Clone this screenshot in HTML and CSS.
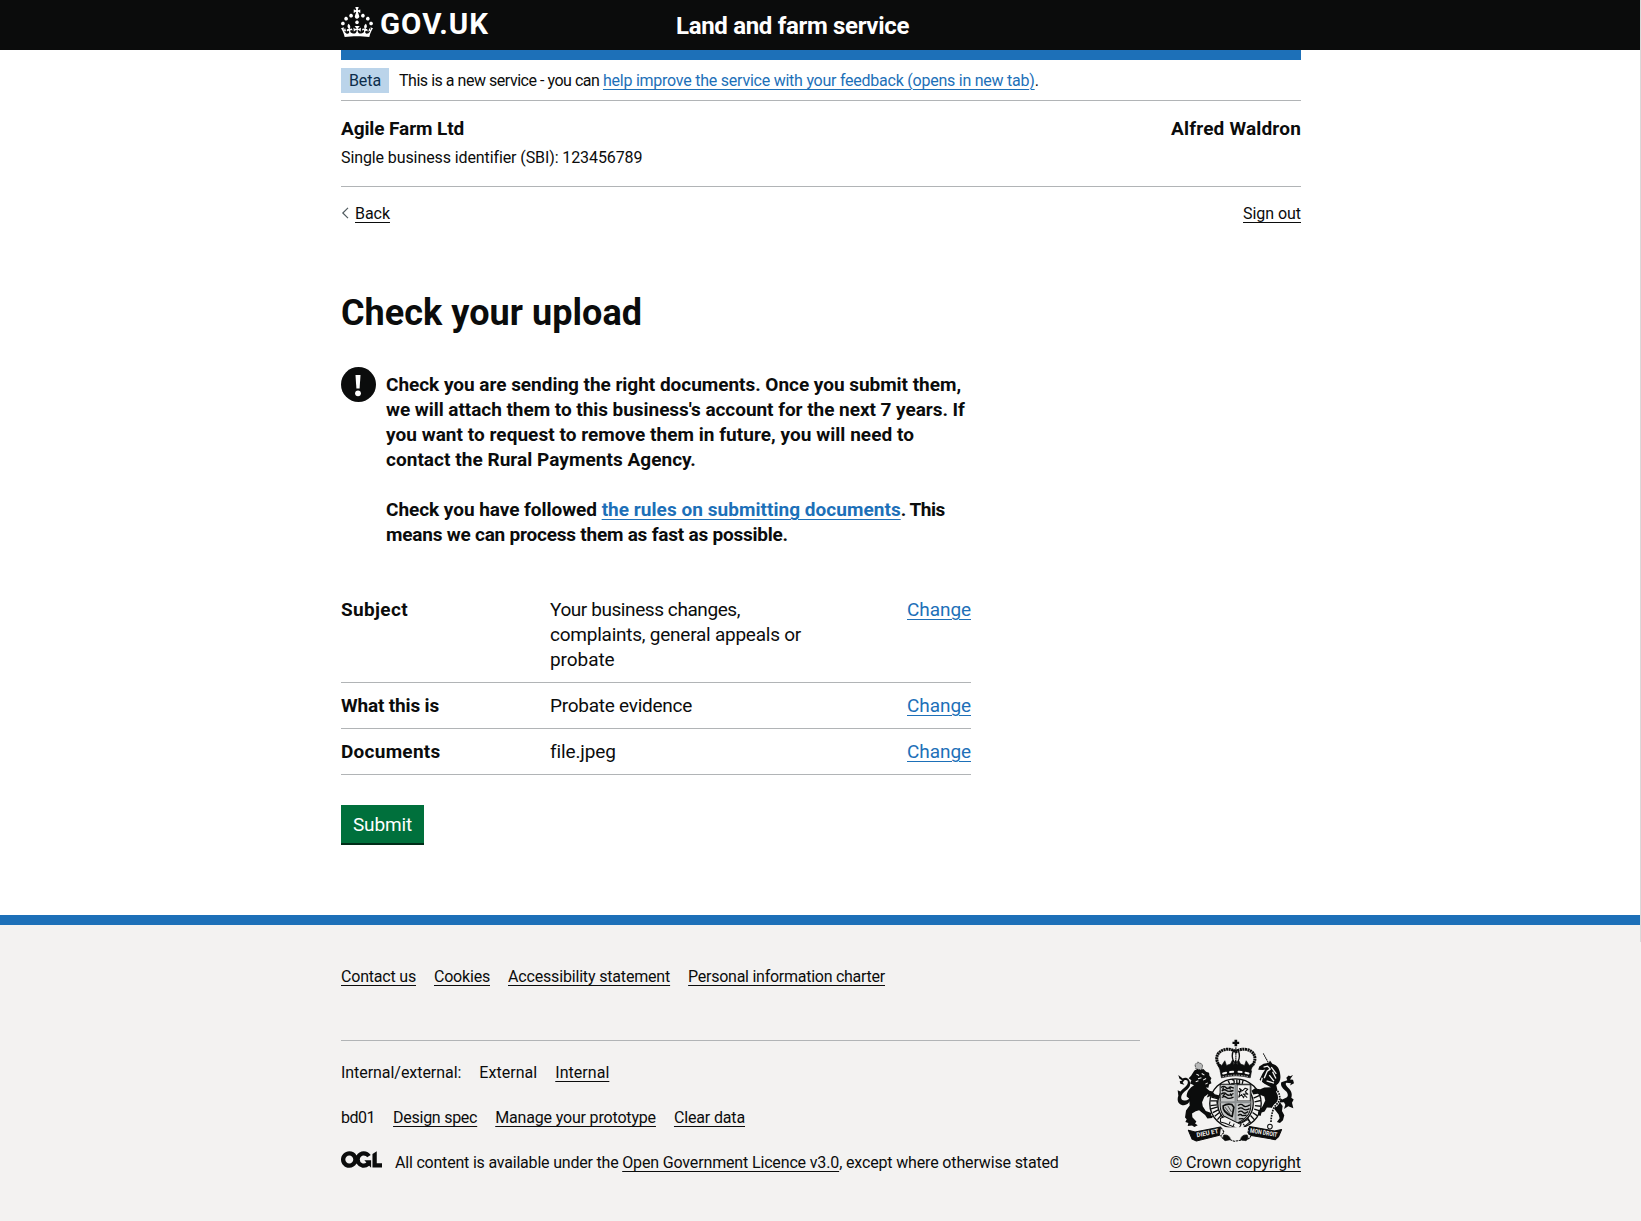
FILE: index.html
```html
<!DOCTYPE html>
<html lang="en">
<head>
<meta charset="utf-8">
<title>Check your upload</title>
<link rel="stylesheet" href="styles.css">
</head>
<body>
<header class="header">
  <div class="container header-row">
    <a class="logo" href="#">
      <svg class="logo-crown" viewBox="0 0 32 30" width="32" height="30" fill="#fff" aria-hidden="true"><path fill-rule="evenodd" d="M22.6 10.4c-1 .4-2-.1-2.4-1-.4-.9.1-2 1-2.4.9-.4 2 .1 2.4 1s-.1 2-1 2.4m-5.9 6.7c-.9.4-2-.1-2.4-1-.4-.9.1-2 1-2.4.9-.4 2 .1 2.4 1s-.1 2-1 2.4m10.8-3.7c-1 .4-2-.1-2.4-1-.4-.9.1-2 1-2.4.9-.4 2 .1 2.4 1s0 2-1 2.4m3.3 4.8c-1 .4-2-.1-2.4-1-.4-.9.1-2 1-2.4.9-.4 2 .1 2.4 1s-.1 2-1 2.4M17 4.7l2.3 1.2V2.5l-2.3.7-.2-.2.9-3h-3.4l.9 3-.2.2c-.1.1-2.3-.7-2.3-.7v3.4L15 4.7c.1.1.1.2.2.2l-1.3 4c-.1.2-.1.4-.1.6 0 1.1.8 2 1.9 2.2h.7c1-.2 1.9-1.1 1.9-2.1 0-.2 0-.4-.1-.6l-1.3-4c-.1-.2 0-.2.1-.3m-7.6 5.7c.9.4 2-.1 2.4-1 .4-.9-.1-2-1-2.4-.9-.4-2 .1-2.4 1s0 2 1 2.4m-5 3c.9.4 2-.1 2.4-1 .4-.9-.1-2-1-2.4-.9-.4-2 .1-2.4 1s.1 2 1 2.4m-3.2 4.8c.9.4 2-.1 2.4-1 .4-.9-.1-2-1-2.4-.9-.4-2 .1-2.4 1s0 2 1 2.4m14.8 11c4.4 0 8.6.3 12.3.8 1.1-4.5 2.4-7 3.7-8.8l-2.5-.9c.2 1.3.3 1.9 0 2.7-.4-.4-.8-1.1-1.1-2.3l-1.2 4c.7-.5 1.3-.8 2-.9-1.1 2.5-2.6 3.1-3.5 3-1.1-.2-1.7-1.2-1.5-2.1.3-1.2 1.5-1.5 2.1-.1 1.1-2.3-.8-3-2-2.3 1.9-1.9 2.1-3.5.6-5.6-2.1 1.6-2.1 3.2-1.2 5.5-1.2-1.4-3.2-.6-2.5 1.6.9-1.4 2.1-.5 1.9.8-.2 1.1-1.7 2.1-3.5 1.9-2.7-.2-2.9-2.1-2.9-3.6.7-.1 1.9.5 2.9 1.9l.4-4.3c-1.1 1.1-2.1 1.4-3.2 1.4.4-1.2 2.1-3 2.1-3h-5.4s1.7 1.9 2.1 3c-1.1 0-2.1-.2-3.2-1.4l.4 4.3c1-1.4 2.2-2 2.9-1.9-.1 1.5-.2 3.4-2.9 3.6-1.9.2-3.4-.8-3.5-1.9-.2-1.3 1-2.2 1.9-.8.7-2.3-1.2-3-2.5-1.6.9-2.2.9-3.9-1.2-5.5-1.5 2-1.3 3.7.6 5.6-1.2-.7-3.1 0-2 2.3.6-1.4 1.8-1.1 2.1.1.2.9-.3 1.9-1.5 2.1-.9.2-2.4-.5-3.5-3 .6 0 1.2.3 2 .9l-1.2-4c-.3 1.1-.7 1.9-1.1 2.3-.3-.8-.2-1.4 0-2.7l-2.9.9C1.3 23 2.6 25.5 3.7 30c3.7-.5 7.9-.8 12.3-.8"/></svg>
      <span class="logo-text">GOV.UK</span>
    </a>
    <a class="service-name" href="#">Land and farm service</a>
  </div>
</header>

<div class="container">
  <div class="header-bar"></div>
  <div class="phase-banner">
    <strong class="tag">Beta</strong>
    <span class="phase-text"><span class="track-phase">This is a new service - you can </span><a class="link track-24" href="#">help improve the service with your feedback (opens in new tab)</a>.</span>
  </div>
  <div class="business">
    <div class="business-names">
      <strong class="track-10">Agile Farm Ltd</strong>
      <strong class="track-user">Alfred Waldron</strong>
    </div>
    <div class="sbi">Single business identifier (SBI): 123456789</div>
  </div>
  <nav class="nav-row">
    <a class="back" href="#"><svg width="8" height="12" viewBox="0 0 8 12" fill="none" stroke="#505a5f" stroke-width="1.2" aria-hidden="true"><path d="M7 .8 1.800 6 7 11.200"/></svg><span class="link-black">Back</span></a>
    <a class="link-black" href="#">Sign out</a>
  </nav>

  <main class="main">
    <h1>Check your upload</h1>
    <div class="warning">
      <span class="warning-icon"><svg width="35" height="35" viewBox="0 0 35 35" aria-hidden="true"><circle cx="17.5" cy="17.5" r="17.5" fill="#0b0c0c"/><path d="M14.500 8h5l-.9 13.600h-3.200z" fill="#fff"/><circle cx="17" cy="26.300" r="2.900" fill="#fff"/></svg></span>
      <div class="warning-text">
        <p>Check you are sending the right documents. Once you submit them,<br><span class="track-4">we will attach them to this business's account for the next 7 years. If</span><br><span class="track-p4">you want to request to remove them in future, you will need to<br>contact the Rural Payments Agency.</span></p>
        <p><span class="track-4">Check you have followed </span><a class="link track-p4" href="#">the rules on submitting documents</a><span class="track-this">. This</span><br><span class="track-22">means we can process them as fast as possible.</span></p>
      </div>
    </div>
    <dl class="summary">
      <div class="row">
        <dt class="track-subject">Subject</dt>
        <dd><span class="track-42">Your business changes,</span><br><span class="track-24">complaints, general appeals or</span><br><span class="track-7">probate</span></dd>
        <dd class="action"><a class="link" href="#">Change</a></dd>
      </div>
      <div class="row">
        <dt class="track-what">What this is</dt>
        <dd class="track-26">Probate evidence</dd>
        <dd class="action"><a class="link" href="#">Change</a></dd>
      </div>
      <div class="row">
        <dt class="track-documents">Documents</dt>
        <dd class="track-13">file.jpeg</dd>
        <dd class="action"><a class="link" href="#">Change</a></dd>
      </div>
    </dl>
    <button class="button" type="button">Submit</button>
  </main>
</div>

<footer class="footer">
  <div class="container">
    <div class="footer-links top-links">
      <a class="link-black track-20" href="#">Contact us</a>
      <a class="link-black track-20" href="#">Cookies</a>
      <a class="link-black track-17" href="#">Accessibility statement</a>
      <a class="link-black track-26" href="#">Personal information charter</a>
    </div>
    <div class="footer-meta">
      <div class="footer-main">
        <div class="footer-links">
          <span>Internal/external:</span>
          <span class="track-p4">External</span>
          <a class="link-black track-p4" href="#">Internal</a>
        </div>
        <div class="footer-links">
          <span class="track-this">bd01</span>
          <a class="link-black track-26" href="#">Design spec</a>
          <a class="link-black track-17" href="#">Manage your prototype</a>
          <a class="link-black track-15" href="#">Clear data</a>
        </div>
        <div class="licence">
          <svg width="41" height="17" viewBox="0 0 483.2 195.7" fill="#0b0c0c" aria-hidden="true"><path d="M421.5 142.8V.1l-50.7 32.3v161.1h112.4v-50.7zm-122.3-9.6A47.12 47.12 0 0 1 221 97.8c0-26 21.1-47.1 47.1-47.1 16.7 0 31.4 8.7 39.7 21.8l42.7-27.2A97.63 97.63 0 0 0 268.1 0c-36.500 0-68.300 20.100-85.100 49.700A98 98 0 0 0 97.800 0C43.900 0 0 43.900 0 97.800s43.900 97.800 97.800 97.800c36.500 0 68.300-20.100 85.100-49.700a97.760 97.760 0 0 0 149.600 25.400l19.400 22.200h3v-87.800h-80l24.300 27.500zM97.800 145c-26 0-47.100-21.100-47.100-47.100s21.100-47.100 47.100-47.100 47.100 21.100 47.100 47.100S123.800 145 97.800 145"/></svg>
          <span><span class="track-20">All content is available under the </span><a class="link-black track-15" href="#">Open Government Licence v3.0</a><span class="track-15">, except where otherwise stated</span></span>
        </div>
      </div>
      <a class="copyright" href="#">
        <svg class="crest" width="117" height="103" viewBox="144 55 350 308" fill="none" stroke="#0b0c0c" stroke-linejoin="round" aria-hidden="true">
          <!-- crown -->
          <g>
            <path d="M316 57h8v6h6v7h-6v7h-8v-7h-6v-7h6z" fill="#0b0c0c" stroke="none"/>
            <path d="M272 136c-18-22-8-46 18-50 12-2 24 2 30 8 6-6 18-10 30-8 26 4 36 28 18 50" stroke-width="9" stroke-dasharray="6 1.500"/>
            <path d="M314 88c-6 10-5 25 0 36h12c5-11 6-26 0-36z" stroke-width="4"/>
            <path d="M320 80v44" stroke-width="4" stroke-dasharray="4 2"/>
            <path d="M264 126l14 8 9-14 5 14 12-4 6-12 4 14 5-14 5 14 4-14 6 12 12 4 5-14 9 14 14-8-10 25H274z" fill="#0b0c0c" stroke-width="2"/>
            <path d="M273 150q47-14 94 0l-4 21q-43-12-86 0z" fill="#0b0c0c" stroke-width="2"/>
            <path d="M282 158l9-2M303 154l9-1M328 153l9 1M349 156l9 2" stroke="#f3f2f1" stroke-width="6" stroke-linecap="round"/>
            <path d="M280 168q40-10 80 0" stroke="#f3f2f1" stroke-width="2" stroke-dasharray="5 3"/>
          </g>
          <!-- garter -->
          <ellipse cx="319" cy="248" rx="77" ry="74" fill="#f3f2f1" stroke-width="4"/>
          <ellipse cx="319" cy="248" rx="53" ry="59" stroke-width="4"/>
          <path d="M247 229l21 5M244 240h20v9M244 254l20-2M246 264l20-6M251 275l18-9M257 286l15-12M265 296l12-14M373 232l20-9M376 243l19-4M377 254l17 2M375 265l17 5M370 275l15 10M364 284l12 13M355 291l9 15M297 180l5 10M308 176q8 0 7 9t-8 2M323 176v12l8-1V176M342 177l-3 12" stroke-width="4"/>
          <!-- quartered shield -->
          <path d="M273 190h92v63c0 25-14 43-46 55-32-12-46-30-46-55z" fill="#c4c6c6" stroke-width="3"/>
          <path d="M324 192h39v48h-39z" fill="#f3f2f1" stroke-width="2"/>
          <path d="M319 190v117M274 244h90" stroke="#8d9193" stroke-width="6"/>
          <path d="M276 200q8-7 14 0t13-2l11 4M278 210q9-6 14-1t21 0M276 220q9-7 16 0t21-2M278 230q8-6 14 0t21-1M284 200l-4 6M300 198l4 8M287 219l-6 7M303 218l5 8M326 254q10-7 16 0t20-2M327 264q9-6 15 0t19-1M327 274q9-7 14 0t16-2M326 284q8-6 13 0l13-1M329 294l14-1" stroke-width="4"/>
          <path d="M331 203l9 7 8-8 8 3-8 8 8 7-9-1-4 12-6-10-8 8 3-13-4-5 8 2zM341 218l13 12" stroke-width="3"/>
          <path d="M282 255q12-8 26-4l6 8-5 28c-17-7-29-16-27-32z" stroke-width="5"/>
          <path d="M288 259l15 21M296 255l11 18M285 266l20 18" stroke-width="2"/>
          <!-- lion -->
          <path d="M199 137q-3-9 6-10l2-4 3 4q12 1 10 11l-2 9-17-2z" fill="#b8b9b9" stroke-width="2" stroke-dasharray="4 2"/>
          <g fill="#0b0c0c" stroke="none">
            <path d="M196 149l9-4 8 3 10-3 8 8 9 3 1 9 6 7-3 6 3 9-7 4-2 10-8-1 11 10 9 2 7 8 12 3 3 7-4 6-10-5-15-5-10 4 5-11-12 9-7 16 2 12 9 14 17 6-2 7 7 3-3 5-14 2-7-11-18-14-10 3-11 7 1 11 12 13-4 6 8 5-10 5-7-4-13 1 2-9-9-3 4-8-5-5 3-21 11-15-2-21-7-6c-1-14 10-27 22-34l-12-5 4-10-8-6 7-7z"/>
            <path d="M148 163l13 10c12-8 25 5 22 20-3 13-19 17-25 30-4 10 0 17 10 16 8 0 14-5 18-11-2 16-11 25-22 25-14 0-22-13-16-28l-2-17 8 4c7-9 18-14 21-22 4-9-1-15-9-12l-5 7 5 7-12-3-2-8 8-2-9-6z"/>
          </g>
          <path d="M202 160l8 4M218 158l8 5M207 174l10-3M222 178l9-5M200 183l8-3M229 190l7-4" stroke="#f3f2f1" stroke-width="3"/>
          <!-- unicorn -->
          <path d="M402 98l17 31" stroke-width="3" stroke-dasharray="5 1.500"/>
          <g fill="#0b0c0c" stroke="none">
            <path d="M390 137l13-8 16-3 3-7 7 10c16 4 23 17 24 34 2 15-3 24-12 30l3 13c4 8 5 19 2 29l14 20-2 15 7 13-4 15-9 8-9-3 8-11-3-11-15-20-20-1-7 12-9 3-3 10-8-3 1-10 13-16 8-17-3-12-20-8-13 2-5-11 9-7 17 2 12-5 20-1-21-11-13-11 9-19 8-12-7 2-14-1z"/>
            <path d="M491 163l-8 3-5-2-7 7 3 7-18 6c-4 12 6 19 15 28 7 9 6 18-4 20l-8 4-12-8 1 17 16-1 4 8-4 12 13-8 15 6-4-16 5-10-7-5c5-16-4-25-13-34-4-5-5-8-2-11l14 1-3 7 12-7-3-10-9-1z"/>
          </g>
          <path d="M403 139l12-3 8 9-9 6-9 21M426 139l15 20M430 153l10 20M420 163l14 18M412 180l22 7M399 171l-4 15 12 7" stroke="#f3f2f1" stroke-width="4"/>
          <path d="M443 210c10 16 8 32-5 42-8 9-14 26-13 48M447 216c5 15 2 30-8 40" stroke="#f3f2f1" stroke-width="7"/>
          <path d="M445 210c10 16 8 32-5 42-8 9-14 26-15 54" stroke-width="5" stroke-dasharray="5 3"/>
          <circle cx="422" cy="317" r="7" stroke-width="3"/>
          <!-- garter buckle and motto scroll -->
          <path d="M274 292l13-5 49 24-8 13-40-17-14-4zM333 309l22-13 7 7-24 21-10 10-18-17" fill="#f3f2f1" stroke-width="3"/>
          <path d="M300 309l3-7M312 315l3-7M342 309l4 5" stroke-width="3"/>
          <path d="M178 328l20 5 76-15-3 25-69 17-13-6zM457 326l-21 4-75-13-4 25 81 14 10-9z" fill="#0b0c0c" stroke-width="3"/>
          <path d="M276 320l9 14-10 10q5 13 20 9l20 8 30-5q17 0 20-12l-9-7 3-19" fill="#f3f2f1" stroke-width="3" stroke-dasharray="7 2"/>
          <path d="M284 342q17-2 20 14l-16 3q-10-5-4-17zM354 342q-17-2-20 14l16 3q10-5 4-17z" fill="#0b0c0c" stroke-width="2"/>
          <g font-family="Roboto, sans-serif" font-weight="700" font-size="19" fill="#f3f2f1" stroke="none">
            <text transform="translate(204 349) rotate(-11)" textLength="66" lengthAdjust="spacingAndGlyphs">DIEU ET</text>
            <text transform="translate(362 335) rotate(9)" textLength="82" lengthAdjust="spacingAndGlyphs">MON DROIT</text>
          </g>
        </svg>
        <span class="link-black track-7">© Crown copyright</span>
      </a>
    </div>
  </div>
</footer>
<div class="scroll-edge"></div>
</body>
</html>
```
FILE: styles.css
```css
* { box-sizing: border-box; }
body {
  margin: 0;
  min-height: 1221px;
  display: flex;
  flex-direction: column;
  position: relative;
  background: #fff;
  color: #0b0c0c;
  font: 16px/20px Roboto, "Liberation Sans", sans-serif;
  letter-spacing: -0.05px;
}
p, h1, dl, dd { margin: 0; }
a { color: inherit; text-decoration: none; }
svg { display: block; flex: none; }
.container { width: 960px; margin: 0 auto 0 341px; }

.link, .link-black {
  text-decoration: underline;
  text-decoration-thickness: 1px;
  text-underline-offset: 3px;
}
.link { color: #1d70b8; }

/* Header */
.header { height: 50px; background: #0b0c0c; color: #fff; font-weight: 700; }
.header-row { display: flex; }
.logo { display: flex; width: 335px; padding-top: 7px; gap: 7px; }
.logo-text { font-size: 29.5px; line-height: 34px; letter-spacing: 1px; }
.service-name { padding-top: 11px; font-size: 24px; line-height: 30px; letter-spacing: -0.32px; }
.header-bar { height: 10px; background: #1d70b8; }

/* Phase banner */
.phase-banner {
  display: flex;
  align-items: center;
  gap: 10px;
  height: 41px;
  border-bottom: 1px solid #b1b4b6;
}
.tag {
  width: 48px;
  padding: 3px 8px 2px;
  background: #bbd4ea;
  color: #0c2d4a;
  font-weight: 400;
  letter-spacing: -0.1px;
}
.phase-text { padding-top: 2px; white-space: nowrap; }

/* Business details */
.business { height: 86px; padding-top: 15px; border-bottom: 1px solid #b1b4b6; }
.business-names { display: flex; justify-content: space-between; font-size: 19px; line-height: 25px; }
.sbi { margin-top: 7px; letter-spacing: -0.1px; }
.nav-row { display: flex; justify-content: space-between; padding-top: 17px; }
.back { display: flex; align-items: center; gap: 6px; }
.back svg { margin-top: -3px; }

/* Main content */
.main { width: 630px; padding: 69px 0 70px; font-size: 19px; line-height: 25px; }
h1 { font-size: 36px; line-height: 40px; letter-spacing: 0.04px; }
.warning { display: flex; gap: 10px; margin-top: 34px; font-weight: 700; }
.warning-text { display: grid; gap: 25px; padding-top: 5px; white-space: nowrap; letter-spacing: -0.03px; }

.summary { margin-top: 40px; }
.row {
  display: grid;
  grid-template-columns: 209px 1fr auto;
  padding: 10px 0;
  border-bottom: 1px solid #b1b4b6;
}
.row dt { font-weight: 700; }
.action { letter-spacing: -0.07px; }
.button {
  display: block;
  width: 83px;
  height: 38px;
  margin: 30px 0 2px;
  padding: 1px 0 0;
  border: 0;
  background: #00703c;
  box-shadow: 0 2px 0 #002d18;
  color: #fff;
  font: inherit;
  letter-spacing: -0.15px;
}

/* Footer */
.footer { flex: 1; border-top: 10px solid #1d70b8; background: #f3f2f1; }
.footer-links { display: flex; gap: 18px; white-space: nowrap; }
.top-links { padding: 42px 0 52px; }
.footer-meta { display: flex; justify-content: space-between; }
.footer-main {
  display: grid;
  align-content: start;
  gap: 25px;
  width: 799px;
  margin-top: 1px;
  padding-top: 22px;
  border-top: 1px solid #b1b4b6;
}
.licence { display: flex; gap: 13px; align-items: flex-start; white-space: nowrap; }
.licence svg { margin-top: -2px; }
.copyright { display: flex; flex-direction: column; align-items: center; gap: 11px; white-space: nowrap; }

.scroll-edge {
  position: absolute;
  top: 0;
  right: 0;
  width: 1px;
  height: 942px;
  background: #d9d9d9;
}

/* Tracking adjustments */
.track-phase { letter-spacing: -0.47px; }
.track-this { letter-spacing: -0.49px; }
.track-42 { letter-spacing: -0.42px; }
.track-26 { letter-spacing: -0.26px; }
.track-24 { letter-spacing: -0.24px; }
.track-22 { letter-spacing: -0.22px; }
.track-20 { letter-spacing: -0.2px; }
.track-17 { letter-spacing: -0.17px; }
.track-15 { letter-spacing: -0.15px; }
.track-what { letter-spacing: -0.16px; }
.track-13 { letter-spacing: -0.13px; }
.track-10 { letter-spacing: -0.1px; }
.track-7 { letter-spacing: -0.07px; }
.track-4 { letter-spacing: -0.045px; }
.track-p4 { letter-spacing: 0.04px; }
.track-user { letter-spacing: 0.19px; }
.track-subject { letter-spacing: 0.35px; }
.track-documents { letter-spacing: 0.26px; }
```
